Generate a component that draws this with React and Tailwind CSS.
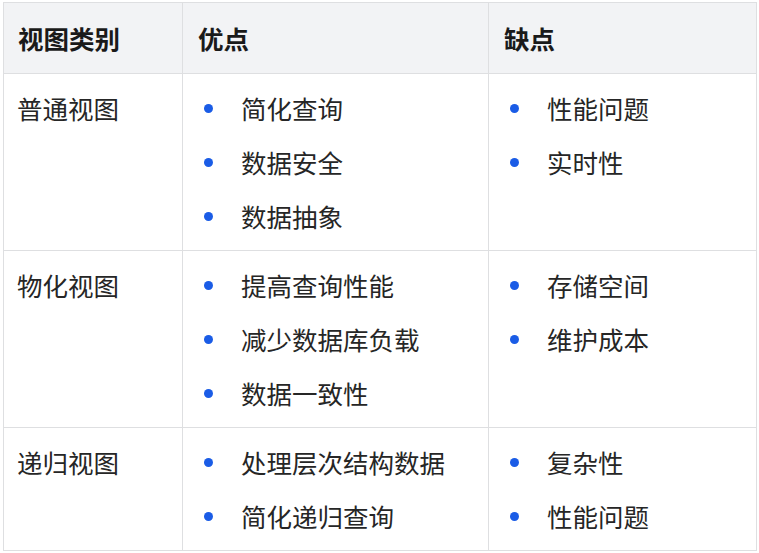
const rows = [
  { type: "普通视图", pros: ["简化查询", "数据安全", "数据抽象"], cons: ["性能问题", "实时性"] },
  { type: "物化视图", pros: ["提高查询性能", "减少数据库负载", "数据一致性"], cons: ["存储空间", "维护成本"] },
  { type: "递归视图", pros: ["处理层次结构数据", "简化递归查询"], cons: ["复杂性", "性能问题"] },
]

function Bullets({ items }) {
  return (
    <ul className="py-[7px]">
      {items.map((t) => (
        <li key={t} className="flex h-[54px] items-center">
          <span className="flex w-[58px] shrink-0 items-center pl-[21px]">
            <span className="h-[9px] w-[9px] rounded-full bg-[#1a5ce6]" />
          </span>
          <span>{t}</span>
        </li>
      ))}
    </ul>
  )
}

export default function App() {
  return (
    <div
      className="min-h-screen bg-white pl-[3px] pt-[2px] text-[25.5px] text-[#262626]"
      style={{ fontFamily: '"Noto Sans CJK SC", "Noto Sans", sans-serif' }}
    >
      <table className="w-[754px] table-fixed border-collapse border border-[#dedfe1]">
        <colgroup>
          <col className="w-[179px]" />
          <col className="w-[306px]" />
          <col />
        </colgroup>
        <thead>
          <tr className="h-[71px] bg-[#f2f3f5] text-left">
            <th className="border border-[#dedfe1] px-[14px] font-bold text-[#1a1a1a]">视图类别</th>
            <th className="border border-[#dedfe1] px-[15px] font-bold text-[#1a1a1a]">优点</th>
            <th className="border border-[#dedfe1] px-[15px] font-bold text-[#1a1a1a]">缺点</th>
          </tr>
        </thead>
        <tbody>
          {rows.map((r) => (
            <tr key={r.type}>
              <td className="border border-[#dedfe1] px-[13px] py-[7px] align-top">
                <div className="flex h-[54px] items-center">{r.type}</div>
              </td>
              <td className="border border-[#dedfe1] p-0 align-top">
                <Bullets items={r.pros} />
              </td>
              <td className="border border-[#dedfe1] p-0 align-top">
                <Bullets items={r.cons} />
              </td>
            </tr>
          ))}
        </tbody>
      </table>
    </div>
  )
}
